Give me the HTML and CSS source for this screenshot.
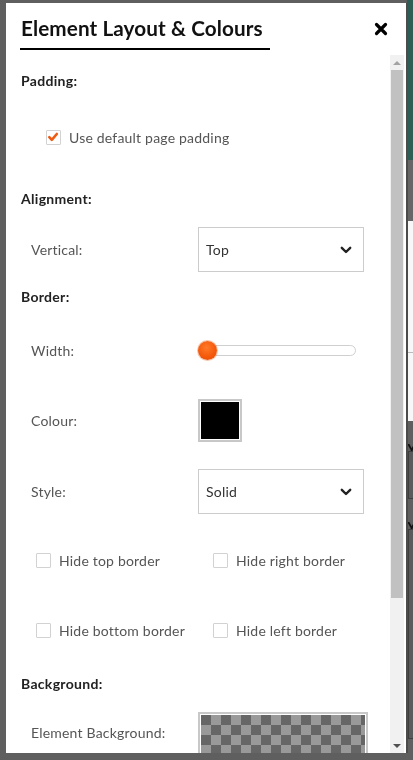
FILE: index.html
```html
<!DOCTYPE html>
<html lang="en">
<head>
<meta charset="utf-8">
<title>Element Layout &amp; Colours</title>
<link rel="stylesheet" href="styles.css">
</head>
<body>
<div class="page-behind">
  <div class="pb-teal"></div>
  <div class="pb-gray"></div>
  <div class="pb-white"><div class="pb-dash"></div></div>
  <div class="pb-field"><span class="pb-y">Y</span><div class="pb-box"></div></div>
  <div class="pb-field"><span class="pb-y">Y</span><div class="pb-box tall"></div></div>
</div>

<div class="modal">
  <div class="modal-head">
    <h1 class="modal-title">Element Layout &amp; Colours</h1>
    <button class="close" aria-label="Close">
      <svg viewBox="0 0 14 14" width="14" height="14"><path d="M2.5 2.5 L11.5 11.5 M11.5 2.5 L2.5 11.5" stroke="#000" stroke-width="3.2" stroke-linecap="round"/></svg>
    </button>
  </div>
  <div class="modal-body">
    <div class="content">
      <div class="row h50 heading">Padding:</div>
      <div class="row h64 indent-check">
        <label class="check"><span class="box checked"><svg viewBox="0 0 14 14" width="14" height="14"><path d="M3.3 7.2 L5.8 9.8 L10.8 4" fill="none" stroke="#f05a12" stroke-width="2.6" stroke-linecap="round" stroke-linejoin="round"/></svg></span><span>Use default page padding</span></label>
      </div>
      <div class="row h58 heading">Alignment:</div>
      <div class="field h45">
        <span class="label">Vertical:</span>
        <div class="select"><span>Top</span><svg class="chev" viewBox="0 0 12 8" width="12" height="8"><path d="M1.8 1.8 L6 6 L10.2 1.8" fill="none" stroke="#222" stroke-width="2.4" stroke-linecap="round" stroke-linejoin="round"/></svg></div>
      </div>
      <div class="row h48 heading">Border:</div>
      <div class="field h60">
        <span class="label">Width:</span>
        <div class="slider"><span class="thumb"></span></div>
      </div>
      <div class="field h80">
        <span class="label">Colour:</span>
        <div class="swatch"><span></span></div>
      </div>
      <div class="field h45 mt9">
        <span class="label">Style:</span>
        <div class="select"><span>Solid</span><svg class="chev" viewBox="0 0 12 8" width="12" height="8"><path d="M1.8 1.8 L6 6 L10.2 1.8" fill="none" stroke="#222" stroke-width="2.4" stroke-linecap="round" stroke-linejoin="round"/></svg></div>
      </div>
      <div class="checks h92">
        <label class="check"><span class="box"></span><span>Hide top border</span></label>
        <label class="check"><span class="box"></span><span>Hide right border</span></label>
      </div>
      <div class="checks h48">
        <label class="check"><span class="box"></span><span>Hide bottom border</span></label>
        <label class="check"><span class="box"></span><span>Hide left border</span></label>
      </div>
      <div class="row h58 heading">Background:</div>
      <div class="field bg-field">
        <span class="label">Element Background:</span>
        <div class="checker-frame"><div class="checker"></div></div>
      </div>
    </div>
    <div class="scrollbar">
      <span class="arrow up"></span>
      <div class="track"><div class="thumb-bar"></div></div>
      <span class="arrow down"></span>
    </div>
  </div>
</div>
</body>
</html>
```

FILE: styles.css
```css
* { box-sizing: border-box; }

html, body {
  margin: 0;
  height: 100%;
  overflow: hidden;
}

body {
  background: #5f5f5f;
  font-family: "Lato", "Open Sans", sans-serif;
  color: #333;
}

/* the page visible behind the modal, on the right edge */
.page-behind {
  position: fixed;
  top: 0;
  left: 407px;
  width: 6px;
  height: 760px;
  display: flex;
  flex-direction: column;
}
.pb-teal { height: 160px; background: #2d5e55; }
.pb-gray { height: 61px; background: #666; }
.pb-white {
  height: 200px;
  background: #f7f7f7;
  position: relative;
}
.pb-dash {
  position: absolute;
  top: 131px;
  left: 1px;
  width: 5px;
  border-top: 1px dashed #bbb;
}
.pb-field {
  display: flex;
  flex-direction: column;
  padding-top: 22px;
}
.pb-y {
  font: bold 14px "Liberation Sans", sans-serif;
  color: #111;
  line-height: 12px;
}
.pb-box {
  height: 48px;
  border: 1px solid #3f3f3f;
  border-right: 0;
  margin-left: 1px;
  margin-top: -4px;
  background: #5a5a5a;
}
.pb-box.tall { height: 210px; }

/* modal */
.modal {
  position: relative;
  margin: 3px 0 0 6px;
  width: 400px;
  height: 750px;
  background: #fff;
  display: flex;
  flex-direction: column;
  box-shadow: 2px 0 0 #4c4c4c;
}

.modal-head {
  height: 52px;
  flex: none;
  display: flex;
  align-items: flex-start;
  justify-content: space-between;
  padding: 0 18px 0 14px;
}

.modal-title {
  margin: 0;
  padding: 13px 7px 0 1px;
  height: 47px;
  font-size: 20.7px;
  font-weight: 700;
  color: #111;
  border-bottom: 2px solid #000;
  line-height: 25px;
  letter-spacing: 0.1px;
}

.close {
  margin-top: 19px;
  padding: 0;
  border: 0;
  background: none;
  width: 14px;
  height: 14px;
  display: flex;
}

.modal-body {
  flex: 1;
  display: flex;
  min-height: 0;
  overflow: hidden;
}

.content {
  flex: 1;
  min-width: 0;
  display: flex;
  flex-direction: column;
  overflow: hidden;
}
.content > * { flex: none; }

.row { display: flex; align-items: center; }
.heading {
  padding-left: 15px;
  font-size: 14px;
  font-weight: 700;
  color: #222;
  letter-spacing: 0.3px;
}
.h45 { height: 45px; }
.h48 { height: 48px; }
.h50 { height: 50px; }
.h58 { height: 58px; }
.h60 { height: 60px; }
.h64 { height: 64px; }
.h80 { height: 80px; }
.h92 { height: 92px; }
.mt9 { margin-top: 9px; }

.indent-check { padding-left: 40px; }

.check {
  display: flex;
  align-items: center;
  gap: 8px;
  font-size: 14px;
  letter-spacing: 0.2px;
  color: #555;
}
.box {
  width: 15px;
  height: 15px;
  border: 1px solid #d2d2d2;
  border-radius: 1px;
  background: #fff;
  flex: none;
  display: flex;
}
.box svg { margin: -1px 0 0 -1px; }

.field {
  display: grid;
  grid-template-columns: 167px 1fr;
  align-items: center;
  padding-left: 25px;
}
.label {
  font-size: 14px;
  letter-spacing: 0.2px;
  color: #555;
}

.select {
  width: 166px;
  height: 45px;
  border: 1px solid #ccc;
  display: flex;
  align-items: center;
  justify-content: space-between;
  padding: 0 11px 0 7px;
  font-size: 14px;
  letter-spacing: 0.2px;
  color: #333;
}
.chev { margin-top: 1px; }

.slider {
  position: relative;
  width: 158px;
  height: 11px;
  border: 1px solid #cfcfcf;
  border-radius: 6px;
  background: #fff;
}
.thumb {
  position: absolute;
  left: -1px;
  top: -5px;
  width: 19px;
  height: 19px;
  border-radius: 50%;
  background: radial-gradient(circle at 45% 35%, #ff7a2a 0%, #f55a0c 55%, #e24a00 100%);
  box-shadow: 0 0 0 1px rgba(230, 90, 20, 0.35);
}

.swatch {
  width: 44px;
  height: 43px;
  border: 2px solid #c8c8c8;
  padding: 1px;
  background: #fff;
  display: flex;
}
.swatch span { flex: 1; background: #000; }

.checks {
  display: grid;
  grid-template-columns: 177px 1fr;
  align-items: center;
  padding-left: 30px;
}

.bg-field {
  align-items: start;
  height: 44px;
}
.bg-field .label { padding-top: 12px; }
.checker-frame {
  width: 170px;
  height: 60px;
  border: 2px solid #c8c8c8;
  padding: 1px;
  background: #fff;
}
.checker {
  width: 100%;
  height: 100%;
  background-color: #666;
  background-image:
    linear-gradient(45deg, #999 25%, transparent 25%, transparent 75%, #999 75%),
    linear-gradient(45deg, #999 25%, transparent 25%, transparent 75%, #999 75%);
  background-size: 20px 20px;
  background-position: 0 0, 10px 10px;
}

/* fake scrollbar */
.scrollbar {
  width: 16px;
  flex: none;
  padding-right: 2px;
  display: flex;
  flex-direction: column;
  background: linear-gradient(to right, #f1f1f1 14px, #fff 14px);
}
.arrow {
  height: 15px;
  flex: none;
  display: flex;
  justify-content: center;
  align-items: center;
  background: #f1f1f1;
}
.arrow::before {
  content: "";
  border-left: 4px solid transparent;
  border-right: 4px solid transparent;
}
.arrow.up::before { border-bottom: 4px solid #a3a3a3; }
.arrow.down::before { border-top: 4px solid #505050; }
.track {
  flex: 1;
  padding: 0 1px;
  background: #f1f1f1;
}
.thumb-bar {
  height: 528px;
  background: #c1c1c1;
}
```
